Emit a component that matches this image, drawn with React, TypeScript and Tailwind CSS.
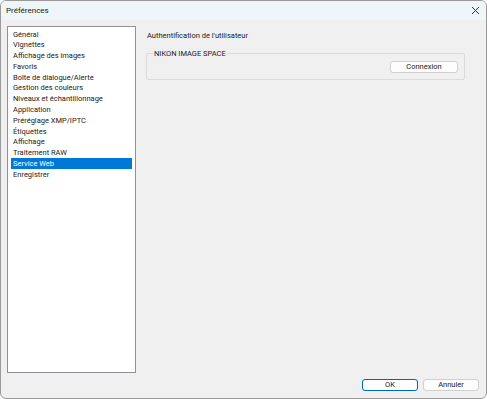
import React from 'react';

const items = [
  'Général',
  'Vignettes',
  'Affichage des images',
  'Favoris',
  'Boîte de dialogue/Alerte',
  'Gestion des couleurs',
  'Niveaux et échantillonnage',
  'Application',
  'Préréglage XMP/IPTC',
  'Étiquettes',
  'Affichage',
  'Traitement RAW',
  'Service Web',
  'Enregistrer',
];

export default function App() {
  const selected = 'Service Web';

  return (
    <div
      className="w-[487px] h-[399px] bg-[#f0f0f0] border border-[#9a9a9a] rounded-[6px] overflow-hidden flex flex-col text-[#1a1a1a]"
      style={{ fontFamily: 'Roboto, "Liberation Sans", sans-serif' }}
    >
      {/* Title bar */}
      <div className="h-[19px] bg-[#eef6f9] flex items-center justify-between pl-[5px] pr-[6px] shrink-0">
        <span className="text-[8px] leading-none">Préférences</span>
        <svg width="9" height="9" viewBox="0 0 9 9" className="text-[#333]">
          <path d="M1 1L8 8M8 1L1 8" stroke="currentColor" strokeWidth="1" />
        </svg>
      </div>

      {/* Body */}
      <div className="flex-1 flex flex-col pt-[6px] pl-[6px] pr-[7px] pb-[7px]">
        <div className="flex gap-[10px]">
          {/* Category list */}
          <div className="w-[129px] h-[347px] bg-white border border-[#8e9196] pt-[2px] px-[3px] shrink-0">
            {items.map((item) => (
              <div
                key={item}
                className={
                  item === selected
                    ? 'h-[10.77px] flex items-center px-[2px] bg-[#0078d7] text-white text-[7.5px] leading-none'
                    : 'h-[10.77px] flex items-center px-[2px] text-[7.5px] leading-none'
                }
              >
                {item}
              </div>
            ))}
          </div>

          {/* Settings panel */}
          <div className="flex-1 pt-[6px]">
            <div className="text-[7.5px] leading-none pl-[1px]">Authentification de l'utilisateur</div>
            <fieldset className="mt-[10px] w-[319px] h-[30px] border border-[#dcdcdc] rounded-[2px] px-[6px] pt-0 pb-0 flex flex-col">
              <legend className="text-[7.5px] leading-none px-[1px]">NIKON IMAGE SPACE</legend>
              <div className="flex justify-end mt-[4px]">
                <button className="w-[68px] h-[12px] bg-[#fdfdfd] border border-[#d0d0d0] rounded-[3px] text-[7.5px] leading-none flex items-center justify-center">
                  Connexion
                </button>
              </div>
            </fieldset>
          </div>
        </div>

        {/* Footer buttons */}
        <div className="mt-auto flex justify-end gap-[5px]">
          <button className="w-[56px] h-[12px] bg-[#fdfdfd] border border-[#0067c0] rounded-[3px] text-[7.5px] leading-none flex items-center justify-center">
            OK
          </button>
          <button className="w-[56px] h-[12px] bg-[#fdfdfd] border border-[#d0d0d0] rounded-[3px] text-[7.5px] leading-none flex items-center justify-center">
            Annuler
          </button>
        </div>
      </div>
    </div>
  );
}
